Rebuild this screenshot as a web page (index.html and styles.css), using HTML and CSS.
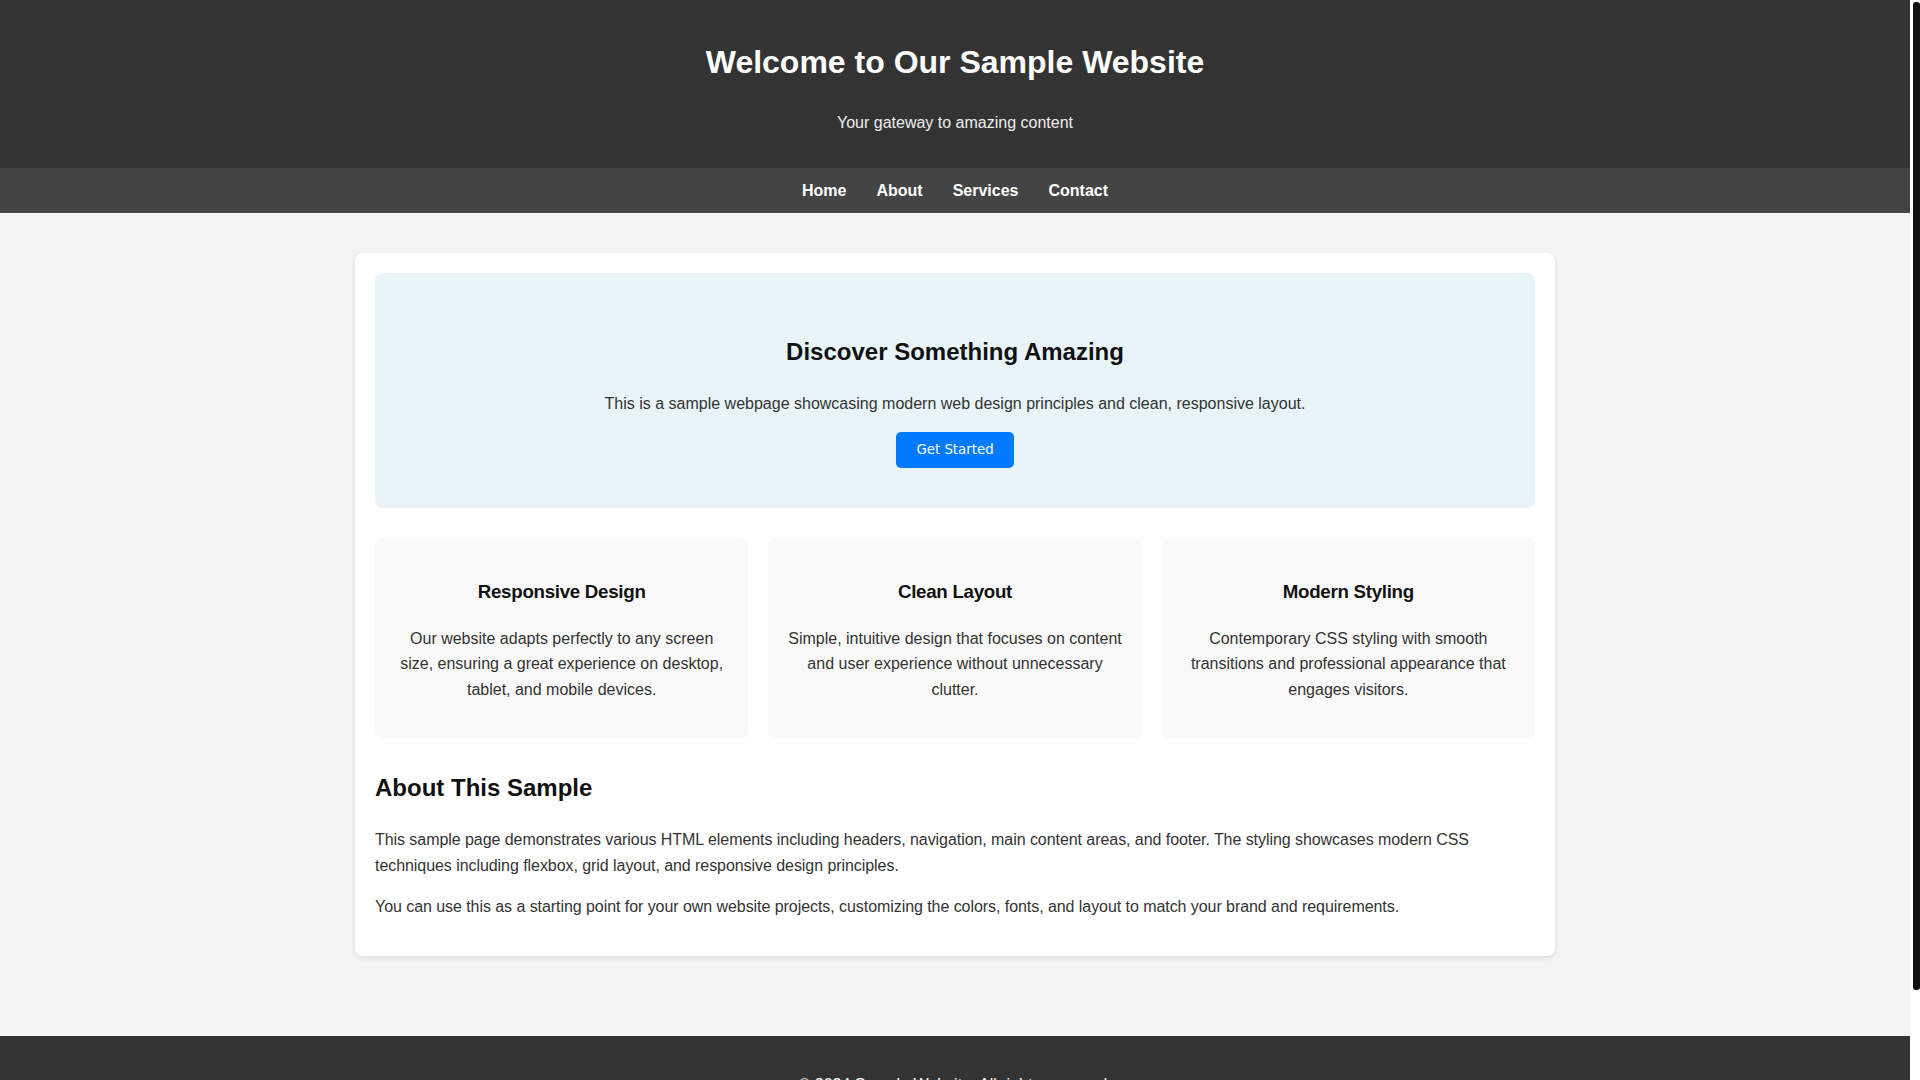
FILE: index.html
```html
<!DOCTYPE html>
<html lang="en">
<head>
<meta charset="utf-8">
<title>Sample Website</title>
<link rel="stylesheet" href="styles.css">
</head>
<body>
<header class="site-header">
  <h1>Welcome to Our Sample Website</h1>
  <p>Your gateway to amazing content</p>
</header>
<nav class="site-nav">
  <ul>
    <li><a href="#">Home</a></li>
    <li><a href="#">About</a></li>
    <li><a href="#">Services</a></li>
    <li><a href="#">Contact</a></li>
  </ul>
</nav>
<main class="container">
  <section class="hero">
    <h2>Discover Something Amazing</h2>
    <p>This is a sample webpage showcasing modern web design principles and clean, responsive layout.</p>
    <button class="btn">Get Started</button>
  </section>
  <section class="features">
    <div class="feature">
      <h3>Responsive Design</h3>
      <p>Our website adapts perfectly to any screen size, ensuring a great experience on desktop, tablet, and mobile devices.</p>
    </div>
    <div class="feature">
      <h3>Clean Layout</h3>
      <p>Simple, intuitive design that focuses on content and user experience without unnecessary clutter.</p>
    </div>
    <div class="feature">
      <h3>Modern Styling</h3>
      <p>Contemporary CSS styling with smooth transitions and professional appearance that engages visitors.</p>
    </div>
  </section>
  <section class="about">
    <h2>About This Sample</h2>
    <p>This sample page demonstrates various HTML elements including headers, navigation, main content areas, and footer. The styling showcases modern CSS techniques including flexbox, grid layout, and responsive design principles.</p>
    <p>You can use this as a starting point for your own website projects, customizing the colors, fonts, and layout to match your brand and requirements.</p>
  </section>
</main>
<footer class="site-footer">
  <p>&copy; 2024 Sample Website. All rights reserved.</p>
</footer>
</body>
</html>
```
FILE: styles.css
```css
html {
  background: #ffffff;
}

body {
  margin: 0 10px 0 0;
  font-family: "Liberation Sans", Arial, sans-serif;
  line-height: 1.6;
  color: #333;
  background: #f4f4f4;
}

/* scrollbar thumb lookalike, drawn over the right-hand track strip */
body::after {
  content: "";
  position: fixed;
  top: 2px;
  right: 0;
  width: 7px;
  height: 988px;
  background: #111111;
  border-radius: 3px;
}

.site-header {
  background: #333;
  color: #fff;
  text-align: center;
  padding: 1rem 0;
}

.site-header p {
  color: #eee;
}

.site-nav {
  background: #444;
  padding: 10px 0;
}

.site-nav ul {
  list-style: none;
  margin: 0;
  padding: 0;
  display: flex;
  justify-content: center;
  gap: 30px;
  line-height: 25px;
}

.site-nav a {
  color: #fff;
  text-decoration: none;
  font-weight: bold;
}

.container {
  max-width: 1200px;
  margin: 40px auto 80px;
  padding: 20px;
  box-sizing: border-box;
  background: #fff;
  border-radius: 8px;
  box-shadow: 0 2px 5px rgba(0, 0, 0, 0.1);
}

.hero {
  background: #e8f4f8;
  border-radius: 8px;
  padding: 40px;
  text-align: center;
  margin-bottom: 30px;
}

.hero h2 {
  color: #111;
}

.btn {
  display: inline-block;
  vertical-align: middle;
  background: #007bff;
  color: #fff;
  border: none;
  border-radius: 5px;
  padding: 10px 20px;
  font-family: "DejaVu Sans", sans-serif;
  font-size: 13.333px;
  line-height: 16px;
  cursor: pointer;
}

.features {
  display: grid;
  grid-template-columns: repeat(3, 1fr);
  gap: 20px;
  margin: 30px 0;
}

.feature {
  background: #f9f9f9;
  border-radius: 8px;
  padding: 20px 18px;
  text-align: center;
}

.feature h3 {
  color: #111;
  letter-spacing: -0.28px;
}

.about h2 {
  color: #111;
}

.about p {
  letter-spacing: -0.06px;
}

.site-footer {
  background: #333;
  color: #fff;
  text-align: center;
  padding: 20px;
}
```
